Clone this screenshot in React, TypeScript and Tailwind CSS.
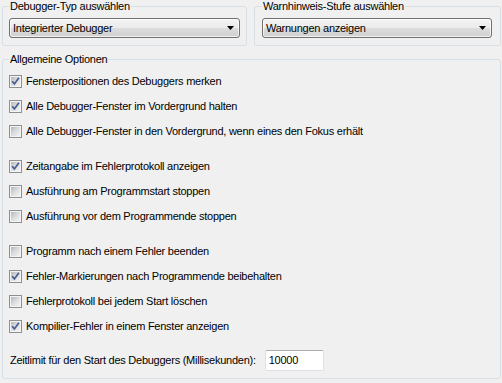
import React from "react";

type Opt = { label: string; checked: boolean };

const sections: Opt[][] = [
  [
    { label: "Fensterpositionen des Debuggers merken", checked: true },
    { label: "Alle Debugger-Fenster im Vordergrund halten", checked: true },
    { label: "Alle Debugger-Fenster in den Vordergrund, wenn eines den Fokus erhält", checked: false },
  ],
  [
    { label: "Zeitangabe im Fehlerprotokoll anzeigen", checked: true },
    { label: "Ausführung am Programmstart stoppen", checked: false },
    { label: "Ausführung vor dem Programmende stoppen", checked: false },
  ],
  [
    { label: "Programm nach einem Fehler beenden", checked: false },
    { label: "Fehler-Markierungen nach Programmende beibehalten", checked: true },
    { label: "Fehlerprotokoll bei jedem Start löschen", checked: false },
    { label: "Kompilier-Fehler in einem Fenster anzeigen", checked: true },
  ],
];

function CheckBox({ checked }: { checked: boolean }) {
  return (
    <span className="relative w-[13px] h-[13px] shrink-0 border border-[#8e8f8f] bg-[#f4f4f4] p-px">
      <span className="block w-full h-full bg-gradient-to-br from-[#b4b8bd] via-[#dcdddf] to-[#f3f3f3]" />
      {checked && (
        <svg className="absolute -left-px -top-px" width="13" height="13" viewBox="0 0 13 13">
          <path d="M3.2 6.3 L5.4 8.9 L9.9 2.8" fill="none" stroke="#4a5c8e" strokeWidth="1.7" />
        </svg>
      )}
    </span>
  );
}

function Combo({ value }: { value: string }) {
  return (
    <div className="h-[20px] flex items-center justify-between rounded-[3px] border border-[#707070] bg-[linear-gradient(#f3f3f3_0%,#ebebeb_50%,#dddddd_50%,#d0d0d0_100%)] pl-[3px] pr-[5px] shadow-[inset_0_0_0_1px_rgba(255,255,255,0.7)]">
      <span className="leading-[13px]">{value}</span>
      <svg width="7" height="4" viewBox="0 0 7 4">
        <path d="M0 0 H7 L3.5 4 Z" fill="#000" />
      </svg>
    </div>
  );
}

export default function App() {
  return (
    <div className="w-[502px] h-[383px] bg-[#f0f0f0] pl-[2px] pr-px font-['Liberation_Sans',Arial,sans-serif] text-[11px] leading-[13px] tracking-[-0.25px] text-black overflow-hidden">
      {/* Auswahl-Gruppen */}
      <div className="flex gap-[7px]">
        <fieldset className="w-[245px] rounded-[3px] border border-[#d5dfe5] pl-[6px] pr-[6px] pt-[5px] pb-[7px]">
          <legend className="px-px">Debugger-Typ auswählen</legend>
          <Combo value="Integrierter Debugger" />
        </fieldset>
        <fieldset className="w-[247px] rounded-[3px] border border-[#d5dfe5] pl-[7px] pr-[8px] pt-[5px] pb-[7px]">
          <legend className="px-px">Warnhinweis-Stufe auswählen</legend>
          <Combo value="Warnungen anzeigen" />
        </fieldset>
      </div>

      {/* Allgemeine Optionen */}
      <fieldset className="mt-[7px] rounded-[3px] border border-[#d5dfe5] pl-[6px] pr-[6px] pt-[3px] pb-[7px]">
        <legend className="px-px">Allgemeine Optionen</legend>
        <div className="flex flex-col gap-[10px]">
          {sections.map((sec, i) => (
            <div key={i} className="flex flex-col">
              {sec.map((o) => (
                <div key={o.label} className="h-[25px] flex items-center gap-[4px]">
                  <CheckBox checked={o.checked} />
                  <span>{o.label}</span>
                </div>
              ))}
            </div>
          ))}
        </div>
        <div className="mt-[11px] flex items-center gap-[9px] pl-px">
          <span>Zeitlimit für den Start des Debuggers (Millisekunden):</span>
          <div className="w-[59px] h-[21px] flex items-center rounded-[2px] border border-[#dbdfe6] border-t-[#abadb3] bg-white pl-[3px]">
            10000
          </div>
        </div>
      </fieldset>
    </div>
  );
}
